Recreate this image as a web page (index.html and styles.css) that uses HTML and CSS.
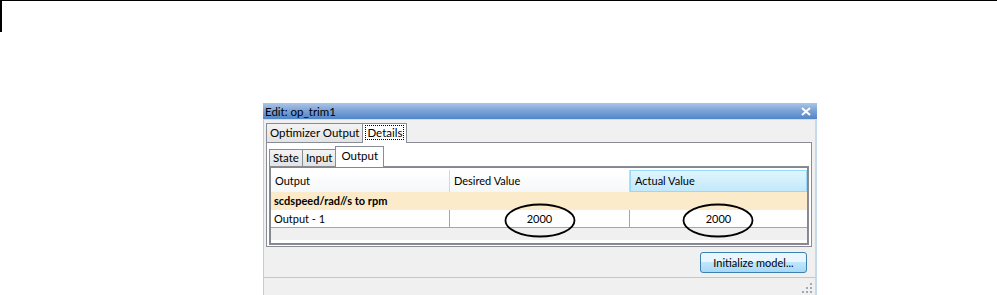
FILE: index.html
```html
<!DOCTYPE html>
<html lang="en">
<head>
    <meta charset="UTF-8">
    <title>Edit: op_trim1</title>
    <link rel="stylesheet" href="styles.css">
</head>
<body>
    <div class="frame"></div>

    <div class="dialog">
        <div class="titlebar">
            <span class="title">Edit: op_trim1</span>
            <svg class="close" width="10" height="9" viewBox="0 0 10 9">
                <path d="M1 1 L9 8 M9 1 L1 8" stroke="#fff" stroke-width="2" fill="none"/>
            </svg>
        </div>

        <div class="body">
            <div class="tabs">
                <div class="tab">Optimizer Output</div>
                <div class="tab active"><span class="focus">Details</span></div>
            </div>
            <div class="panel">
                <div class="tabs inner-tabs">
                    <div class="tab">State</div>
                    <div class="tab">Input</div>
                    <div class="tab active">Output</div>
                </div>
                <div class="panel inner-panel">
                    <div class="grid">
                        <div class="row head">
                            <div class="cell">Output</div>
                            <div class="cell">Desired Value</div>
                            <div class="cell sorted">Actual Value</div>
                        </div>
                        <div class="row group">
                            <div class="cell">scdspeed/rad//s to rpm</div>
                        </div>
                        <div class="row data">
                            <div class="cell">Output - 1</div>
                            <div class="cell num">2000</div>
                            <div class="cell num">2000</div>
                        </div>
                        <div class="filler"></div>

                        <svg class="mark mark-desired" width="72" height="35" viewBox="0 0 72 35">
                            <ellipse cx="36" cy="17.5" rx="34.5" ry="16" fill="none" stroke="#000" stroke-width="1.8"/>
                        </svg>
                        <svg class="mark mark-actual" width="72" height="35" viewBox="0 0 72 35">
                            <ellipse cx="36" cy="17.5" rx="34.5" ry="16" fill="none" stroke="#000" stroke-width="1.8"/>
                        </svg>
                    </div>
                </div>
            </div>
            <div class="actions">
                <button class="btn">Initialize model...</button>
            </div>
        </div>

        <div class="status">
            <svg class="grip" width="10" height="10" viewBox="0 0 10 10">
                <g fill="#a0a8b4">
                    <rect x="8" y="0" width="2" height="2"/>
                    <rect x="4" y="4" width="2" height="2"/>
                    <rect x="8" y="4" width="2" height="2"/>
                    <rect x="0" y="8" width="2" height="2"/>
                    <rect x="4" y="8" width="2" height="2"/>
                    <rect x="8" y="8" width="2" height="2"/>
                </g>
            </svg>
        </div>
    </div>
</body>
</html>
```

FILE: styles.css
```css
body { margin: 0; background: #fff; font-family: Lato, "Liberation Sans", sans-serif; font-size: 11px; color: #000; }

.frame { height: 31px; border-top: 1px solid #000; border-left: 2px solid #000; }

.dialog { width: 554px; height: 192px; margin: 71px 0 0 263px; display: flex; flex-direction: column; }

.titlebar { height: 16px; display: flex; align-items: center; justify-content: space-between; padding: 0 6px 0 2px;
    background: linear-gradient(#abc5e7, #7ea4d8 45%, #5186c8); border-bottom: 1px solid #cddbee; }
.title { font-size: 11.5px; }
.close { margin-top: 1px; }

.body { flex: 1; background: #f0f0f0; border-left: 1px solid #b9cde6; border-right: 2px solid #c5d8ee;
    padding: 3px 3px 0 2px; display: flex; flex-direction: column; }

.tabs { display: flex; align-items: flex-end; height: 19px; font-size: 11.5px; }
.tab { height: 18px; line-height: 18px; padding: 0 3px; border: 1px solid #898c95; border-bottom: none; margin-right: -1px;
    background: linear-gradient(#f3f3f3, #e3e3e3); }
.tab.active { background: #fff; position: relative; z-index: 1; height: 19px; margin-bottom: -1px; }
.focus { outline: 1px dotted #000; outline-offset: 0; padding: 0 1px; }

.panel { background: #fff; border: 1px solid #898c95; padding: 3px 2px 1px 2px; }

.inner-tabs { height: 20px; }
.inner-tabs .tab { height: 16px; line-height: 16px; }
.inner-tabs .tab.active { height: 20px; line-height: 18px; padding: 0 5px; }

.inner-panel { padding: 0; }

.grid { position: relative; border: 1px solid #828790; margin: 0; height: 73px; padding-top: 2px; }

.row { display: grid; grid-template-columns: 179px 180px 1fr; }
.cell { padding: 0 4px; white-space: nowrap; border-right: 1px solid #a6a6a6; }
.cell:last-child { border-right: none; }

.head { height: 22px; line-height: 22px; }
.head .cell { background: linear-gradient(#fff, #f6f7f8); border-right: 1px solid #d5d5d5; }
.head .cell.sorted { background: linear-gradient(#e1f5fe, #c2e9fb); border: 1px solid #96d9f9; line-height: 20px; }

.group { display: block; height: 18px; line-height: 18px; background: #fcebca; font-weight: bold; }
.group .cell { border: none; padding-left: 3px; }

.data { height: 17px; line-height: 17px; background: #fff; border-bottom: 1px solid #a6a6a6; }
.data .cell:first-child { padding-left: 3px; }
.num { text-align: center; }

.filler { height: 12px; background: #f0f0f0; }

.mark { position: absolute; top: 35px; }
.mark-desired { left: 233px; }
.mark-actual { left: 411px; }

.actions { flex: 1; display: flex; justify-content: flex-end; align-items: center; padding-right: 5px; }
.btn { font-family: inherit; font-size: 11px; width: 107px; height: 21px; padding: 0; border: 1px solid #3c7fb1; border-radius: 3px;
    background: linear-gradient(#eaf6fd 50%, #bee6fd 50%, #a7d9f5); color: #000; }

.status { height: 15px; background: #f0f0f0; border-top: 1px solid #b8c9dc; border-left: 1px solid #b9cde6; border-right: 2px solid #c5d8ee;
    display: flex; justify-content: flex-end; align-items: flex-end; padding: 0 3px 2px 0; }
```
